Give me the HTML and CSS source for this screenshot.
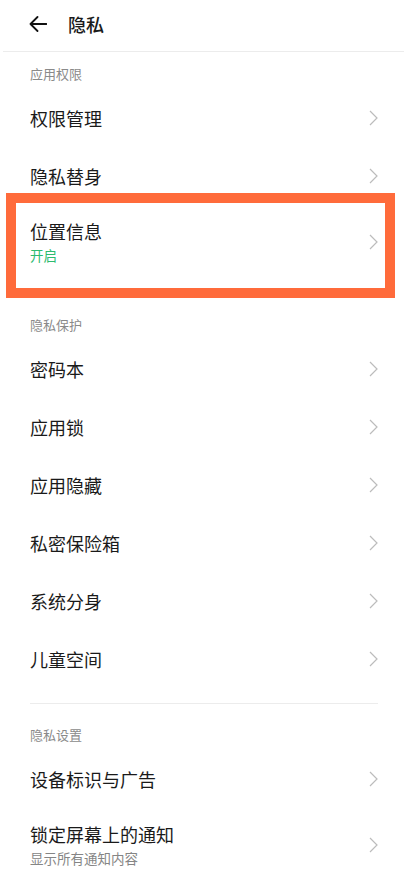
FILE: index.html
```html
<!DOCTYPE html>
<html lang="zh-CN">

<head>
    <meta charset="UTF-8">
    <meta name="viewport" content="width=device-width, initial-scale=1.0">
    <title>隐私</title>
    <link rel="stylesheet" href="styles.css">
</head>

<body>
    <div class="topbar">
        <svg class="back" width="18" height="18" viewBox="0 0 18 18">
            <path d="M1.5 9 H17.5 M8.5 2 L1.5 9 L8.5 16" fill="none" stroke="#111" stroke-width="1.8" stroke-linecap="round" stroke-linejoin="round"/>
        </svg>
        <span class="title">隐私</span>
    </div>

    <div class="section-title">应用权限</div>
    <div class="row"><span class="label">权限管理</span><span class="chev"></span></div>
    <div class="row"><span class="label">隐私替身</span><span class="chev"></span></div>
    <div class="row double marked">
        <div class="texts">
            <span class="label">位置信息</span>
            <span class="sub on">开启</span>
        </div>
        <span class="chev"></span>
    </div>

    <div class="section-title spaced">隐私保护</div>
    <div class="row"><span class="label">密码本</span><span class="chev"></span></div>
    <div class="row"><span class="label">应用锁</span><span class="chev"></span></div>
    <div class="row"><span class="label">应用隐藏</span><span class="chev"></span></div>
    <div class="row"><span class="label">私密保险箱</span><span class="chev"></span></div>
    <div class="row"><span class="label">系统分身</span><span class="chev"></span></div>
    <div class="row"><span class="label">儿童空间</span><span class="chev"></span></div>

    <div class="divider"></div>

    <div class="section-title after-divider">隐私设置</div>
    <div class="row"><span class="label">设备标识与广告</span><span class="chev"></span></div>
    <div class="row double">
        <div class="texts">
            <span class="label">锁定屏幕上的通知</span>
            <span class="sub">显示所有通知内容</span>
        </div>
        <span class="chev"></span>
    </div>

    <script>
        // same chevron for every row
        const chevron = '<svg width="9" height="16" viewBox="0 0 9 16"><polyline points="1,1 8,8 1,15" fill="none" stroke="#bcbcbc" stroke-width="1.2"/></svg>';
        document.querySelectorAll('.chev').forEach(el => el.innerHTML = chevron);
    </script>
</body>

</html>
```

FILE: styles.css
```css
body {
    margin: 0;
    background-color: #fff;
    font-family: "Noto Sans CJK SC", "Noto Sans", sans-serif;
    color: #1a1a1a;
    overflow: hidden;
}

.topbar {
    height: 48px;
    padding: 0 0 3px 26px;
    margin: 0 3px;
    display: flex;
    align-items: center;
    border-bottom: 1px solid #ececec;
}

.back {
    display: block;
}

.title {
    margin-left: 21px;
    font-size: 18px;
    font-weight: 500;
    line-height: 24px;
}

.section-title {
    padding: 12px 30px 5px;
    font-size: 13px;
    line-height: 20px;
    color: #8a8a8a;
}

.section-title.spaced {
    padding-top: 35px;
}

.section-title.after-divider {
    padding-top: 21px;
}

.row {
    height: 58px;
    padding: 0 29px 0 30px;
    display: flex;
    align-items: center;
    justify-content: space-between;
}

.label {
    font-size: 18px;
    line-height: 24px;
}

.row.double {
    height: 75px;
    box-sizing: border-box;
    padding-top: 14px;
    padding-bottom: 16px;
}

.texts {
    display: flex;
    flex-direction: column;
    gap: 3px;
}

.sub {
    font-size: 13.5px;
    line-height: 18px;
    color: #858585;
}

.sub.on {
    color: #2dbb6f;
}

.chev {
    display: flex;
    align-items: center;
}

.chev svg {
    display: block;
}

.marked {
    position: relative;
}

/* orange highlight frame drawn over the row */
.marked::after {
    content: "";
    position: absolute;
    left: 6px;
    right: 12px;
    top: -12px;
    bottom: -18px;
    border: 10px solid #ff6b3b;
}

.divider {
    height: 1px;
    margin: 15px 29px 0 30px;
    background-color: #ececec;
}
```
